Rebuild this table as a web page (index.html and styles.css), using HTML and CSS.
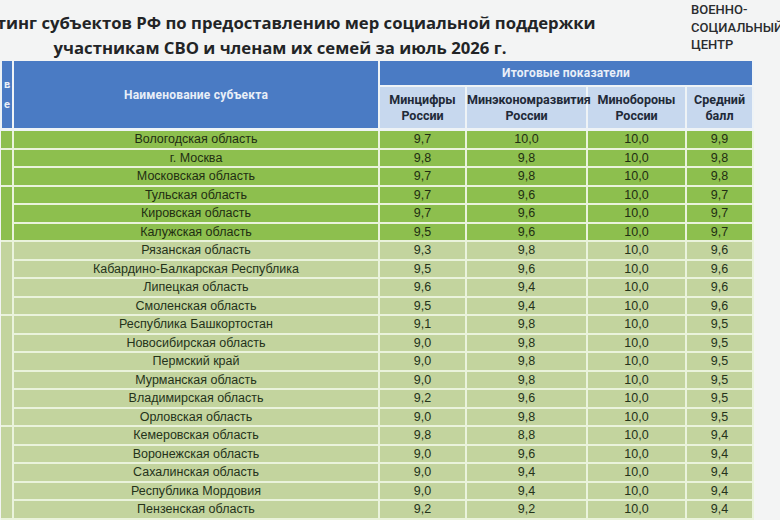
FILE: index.html
```html
<!DOCTYPE html>
<html lang="ru">
<head>
<meta charset="utf-8">
<link rel="stylesheet" href="styles.css">
</head>
<body>
<div class="page">
  <header class="top">
    <div class="title">
      <span class="tline">Рейтинг субъектов РФ по предоставлению мер социальной поддержки</span>
      <span class="tline">участникам СВО и членам их семей за июль 2026 г.</span>
    </div>
    <div class="brand">ВОЕННО-<br>СОЦИАЛЬНЫЙ<br>ЦЕНТР</div>
  </header>
  <table class="rating">
    <colgroup>
      <col class="c-rank"><col class="c-name"><col class="c-a"><col class="c-b"><col class="c-c"><col class="c-d">
    </colgroup>
    <thead>
      <tr class="h1">
        <th rowspan="2" class="hblue rank-h"><span>в<br>е</span></th>
        <th rowspan="2" class="hblue">Наименование субъекта</th>
        <th colspan="4" class="hblue band">Итоговые показатели</th>
      </tr>
      <tr class="h2">
        <th class="hsub">Минцифры<br>России</th>
        <th class="hsub">Минэкономразвития<br>России</th>
        <th class="hsub">Минобороны<br>России</th>
        <th class="hsub">Средний<br>балл</th>
      </tr>
    </thead>
    <tbody>
      <tr class="g"><td class="rk" rowspan="1"></td><td>Вологодская область</td><td>9,7</td><td>10,0</td><td>10,0</td><td>9,9</td></tr>
      <tr class="g"><td class="rk" rowspan="2"></td><td>г. Москва</td><td>9,8</td><td>9,8</td><td>10,0</td><td>9,8</td></tr>
      <tr class="g"><td>Московская область</td><td>9,7</td><td>9,8</td><td>10,0</td><td>9,8</td></tr>
      <tr class="g"><td class="rk" rowspan="3"></td><td>Тульская область</td><td>9,7</td><td>9,6</td><td>10,0</td><td>9,7</td></tr>
      <tr class="g"><td>Кировская область</td><td>9,7</td><td>9,6</td><td>10,0</td><td>9,7</td></tr>
      <tr class="g"><td>Калужская область</td><td>9,5</td><td>9,6</td><td>10,0</td><td>9,7</td></tr>
      <tr class="p"><td class="rk" rowspan="4"></td><td>Рязанская область</td><td>9,3</td><td>9,8</td><td>10,0</td><td>9,6</td></tr>
      <tr class="p"><td>Кабардино-Балкарская Республика</td><td>9,5</td><td>9,6</td><td>10,0</td><td>9,6</td></tr>
      <tr class="p"><td>Липецкая область</td><td>9,6</td><td>9,4</td><td>10,0</td><td>9,6</td></tr>
      <tr class="p"><td>Смоленская область</td><td>9,5</td><td>9,4</td><td>10,0</td><td>9,6</td></tr>
      <tr class="p"><td class="rk" rowspan="6"></td><td>Республика Башкортостан</td><td>9,1</td><td>9,8</td><td>10,0</td><td>9,5</td></tr>
      <tr class="p"><td>Новосибирская область</td><td>9,0</td><td>9,8</td><td>10,0</td><td>9,5</td></tr>
      <tr class="p"><td>Пермский край</td><td>9,0</td><td>9,8</td><td>10,0</td><td>9,5</td></tr>
      <tr class="p"><td>Мурманская область</td><td>9,0</td><td>9,8</td><td>10,0</td><td>9,5</td></tr>
      <tr class="p"><td>Владимирская область</td><td>9,2</td><td>9,6</td><td>10,0</td><td>9,5</td></tr>
      <tr class="p"><td>Орловская область</td><td>9,0</td><td>9,8</td><td>10,0</td><td>9,5</td></tr>
      <tr class="p"><td class="rk" rowspan="5"></td><td>Кемеровская область</td><td>9,8</td><td>8,8</td><td>10,0</td><td>9,4</td></tr>
      <tr class="p"><td>Воронежская область</td><td>9,0</td><td>9,6</td><td>10,0</td><td>9,4</td></tr>
      <tr class="p"><td>Сахалинская область</td><td>9,0</td><td>9,4</td><td>10,0</td><td>9,4</td></tr>
      <tr class="p"><td>Республика Мордовия</td><td>9,0</td><td>9,4</td><td>10,0</td><td>9,4</td></tr>
      <tr class="p"><td>Пензенская область</td><td>9,2</td><td>9,2</td><td>10,0</td><td>9,4</td></tr>
    </tbody>
  </table>
</div>
</body>
</html>
```

FILE: styles.css
```css
html, body {
  margin: 0;
  padding: 0;
  background: #f3f4f4;
}
body {
  width: 780px;
  height: 520px;
  overflow: hidden;
  font-family: "Liberation Sans", Arial, sans-serif;
}
.page {
  width: 780px;
  height: 520px;
  overflow: hidden;
}
.top {
  display: flex;
  height: 61px;
}
.title {
  width: 560px;
  flex: none;
  display: flex;
  flex-direction: column;
  align-items: center;
  padding-top: 10px;
  font-family: "Open Sans", "Liberation Sans", sans-serif;
  font-weight: 700;
  font-size: 16.7px;
  line-height: 25px;
  color: #222426;
}
.tline {
  white-space: nowrap;
}
.brand {
  margin-left: 131px;
  padding-top: 1px;
  font-family: "Roboto", "Liberation Sans", sans-serif;
  font-weight: 500;
  font-size: 13px;
  line-height: 17.5px;
  color: #2a2c2e;
  white-space: nowrap;
}
.rating {
  border-collapse: collapse;
  table-layout: fixed;
  width: 752px;
}
.c-rank { width: 12px; }
.c-name { width: 366px; }
.c-a { width: 87px; }
.c-b { width: 121px; }
.c-c { width: 99px; }
.c-d { width: 67px; }
.rating th {
  font-family: "Roboto", "Liberation Sans", sans-serif;
  font-weight: 700;
  padding: 0;
  border: 2px solid #eef3f6;
}
.rating thead tr:first-child th {
  border-top: none;
}
.hblue {
  background: #4a7bc4;
  color: #e9eff8;
  font-size: 12px;
  letter-spacing: 0.2px;
}
.band {
  height: 24px;
}
.rank-h {
  text-align: left;
  border-left: none;
}
.rank-h span {
  display: block;
  padding-left: 2px;
  line-height: 20px;
  font-size: 11px;
}
.hsub {
  background: #c7d8ee;
  color: #1f2a38;
  font-size: 12.5px;
  line-height: 16px;
  height: 41px;
}
.rating td {
  padding: 0;
  height: 16.5px;
  text-align: center;
  font-size: 12.5px;
  line-height: 14px;
  color: #24321a;
  border: 2px solid #eaf3dc;
  white-space: nowrap;
}
.rating td.rk {
  border-left: none;
}
.g td {
  background: #8dbf4e;
  color: #1f2e12;
}
.p td {
  background: #c3d49e;
}
.rating tbody tr:first-child td {
  border-top: 3px solid #eef3f6;
}
```
